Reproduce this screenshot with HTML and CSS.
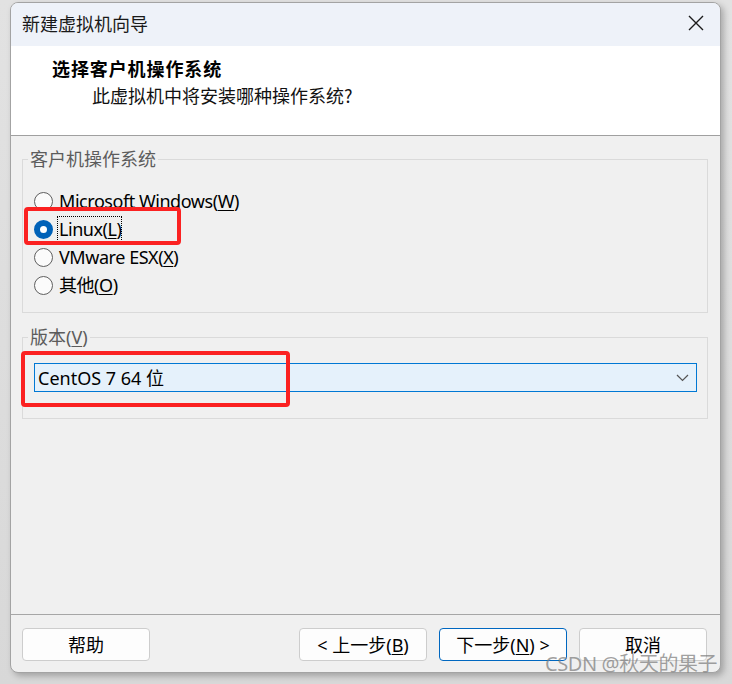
FILE: index.html
```html
<!DOCTYPE html>
<html lang="zh-CN">
<head>
<meta charset="utf-8">
<title>新建虚拟机向导</title>
<link rel="stylesheet" href="styles.css">
</head>
<body>
<div class="window">
  <div class="titlebar">
    <span class="title">新建虚拟机向导</span>
    <svg class="close" width="16" height="16" viewBox="0 0 16 16"><path d="M1 1 L15 15 M15 1 L1 15" stroke="#1b1b1b" stroke-width="1.4" fill="none"/></svg>
  </div>
  <div class="header">
    <div class="h-title">选择客户机操作系统</div>
    <div class="h-sub">此虚拟机中将安装哪种操作系统?</div>
  </div>
  <div class="body">
    <fieldset class="group os-group">
      <legend>客户机操作系统</legend>
      <div class="radio-row"><span class="radio"></span><span class="rlabel">Microsoft Windows(<u>W</u>)</span></div>
      <div class="radio-row"><span class="radio checked"></span><span class="rlabel focus">Linux(<u>L</u>)</span></div>
      <div class="radio-row"><span class="radio"></span><span class="rlabel">VMware ESX(<u>X</u>)</span></div>
      <div class="radio-row"><span class="radio"></span><span class="rlabel">其他(<u>O</u>)</span></div>
    </fieldset>
    <fieldset class="group ver-group">
      <legend>版本(<u>V</u>)</legend>
      <div class="combo">
        <span class="combo-text">CentOS 7 64 位</span>
        <svg class="chev" width="13" height="8" viewBox="0 0 13 8"><path d="M1 1 L6.5 6.5 L12 1" stroke="#555" stroke-width="1.2" fill="none"/></svg>
      </div>
    </fieldset>
    <div class="mark mark-linux"></div>
    <div class="mark mark-ver"></div>
  </div>
  <div class="footer">
    <button class="btn">帮助</button>
    <div class="spacer"></div>
    <button class="btn">&lt; 上一步(<u>B</u>)</button>
    <button class="btn primary">下一步(<u>N</u>) &gt;</button>
    <button class="btn">取消</button>
  </div>
</div>
<div class="watermark">CSDN @秋天的果子</div>
</body>
</html>
```
FILE: styles.css
```css
html, body {
  margin: 0;
  padding: 0;
}
body {
  width: 732px;
  height: 684px;
  overflow: hidden;
  position: relative;
  background: linear-gradient(to bottom, #e2e2e2 0%, #d8d8d8 100%);
  font-family: "Noto Sans", "Noto Sans CJK SC", sans-serif;
  font-size: 18px;
  color: #000;
}
.window {
  box-sizing: border-box;
  margin: 2px 0 0 10px;
  width: 711px;
  height: 671px;
  border: 1px solid #a3a3a3;
  border-radius: 8px;
  overflow: hidden;
  background: #f0f0f0;
  box-shadow: 3px 3px 6px rgba(0,0,0,0.25);
  display: flex;
  flex-direction: column;
}
.titlebar {
  height: 43px;
  flex: none;
  background: #eef2f9;
  display: flex;
  align-items: center;
  padding: 0 0 3px 11px;
  box-sizing: border-box;
}
.title {
  font-size: 18px;
  color: #1a1a1a;
  font-family: "Noto Sans CJK SC", sans-serif;
  flex: 1;
}
.close {
  margin-right: 16px;
}
.header {
  height: 90px;
  flex: none;
  box-sizing: border-box;
  background: #fff;
  border-bottom: 1px solid #a0a0a0;
  padding: 10px 0 0 41px;
  font-family: "Noto Sans CJK SC", sans-serif;
}
.h-title {
  font-weight: bold;
  font-size: 18px;
  line-height: 24px;
  letter-spacing: 0.9px;
}
.h-sub {
  font-size: 18px;
  line-height: 24px;
  margin: 3px 0 0 40px;
  color: #111;
}
.body {
  position: relative;
  height: 478px;
  flex: none;
  padding: 0 12px 0 11px;
  box-sizing: border-box;
  display: flex;
  flex-direction: column;
}
.group {
  margin: 0;
  border: 1px solid #dadada;
  padding: 0 10px 0 5px;
  min-width: 0;
}
.group legend {
  padding: 0 2px;
  line-height: 20px;
  color: #5c5c5c;
  font-family: "Noto Sans", "Noto Sans CJK SC", sans-serif;
}
.os-group {
  margin-top: 13px;
  padding-top: 18px;
  padding-bottom: 13px;
}
.ver-group {
  margin-top: 14px;
  padding-top: 16px;
  padding-bottom: 26px;
}
.radio-row {
  height: 28px;
  display: flex;
  align-items: center;
  padding-left: 6px;
}
.radio {
  box-sizing: border-box;
  width: 19px;
  height: 19px;
  border: 1px solid #5f5f5f;
  border-radius: 50%;
  background: #fbfbfb;
  margin-right: 6px;
  flex: none;
}
.radio.checked {
  border: 6px solid #0062b8;
  background: #fff;
}
.rlabel {
  line-height: 24px;
  color: #000;
  letter-spacing: -0.45px;
}
.rlabel.focus {
  outline: 1px dotted #000;
  outline-offset: 0;
  margin-left: -1px;
  padding-left: 1px;
}
u {
  text-decoration: underline;
  text-underline-offset: 2px;
}
.combo {
  box-sizing: border-box;
  height: 29px;
  margin-left: 6px;
  border: 1px solid #0078d4;
  background: #e5f1fb;
  display: flex;
  align-items: center;
  padding: 0 7px 0 3px;
}
.combo-text {
  flex: 1;
  line-height: 24px;
}
.mark {
  position: absolute;
  box-sizing: border-box;
  border: 4px solid #fb2121;
  border-radius: 4px;
}
.mark-linux {
  left: 13px;
  top: 71px;
  width: 157px;
  height: 38px;
}
.mark-ver {
  left: 10px;
  top: 215px;
  width: 269px;
  height: 56px;
}
.footer {
  flex: 1;
  border-top: 1px solid #a6a6a6;
  display: flex;
  align-items: flex-start;
  padding: 13px 13px 0 11px;
  gap: 12px;
}
.spacer {
  flex: 1;
}
.btn {
  box-sizing: border-box;
  width: 128px;
  height: 33px;
  background: #fdfdfd;
  border: 1px solid #cdcdcd;
  border-radius: 4px;
  font-family: "Noto Sans", "Noto Sans CJK SC", sans-serif;
  font-size: 18px;
  color: #000;
  padding: 0;
  line-height: 24px;
}
.btn.primary {
  border-color: #0067c0;
}
.watermark {
  position: absolute;
  left: 545px;
  top: 651px;
  font-family: "Noto Sans", "Noto Sans CJK SC", sans-serif;
  font-size: 20px;
  color: rgba(125,125,125,0.72);
  line-height: 26px;
  letter-spacing: -0.4px;
}
```
